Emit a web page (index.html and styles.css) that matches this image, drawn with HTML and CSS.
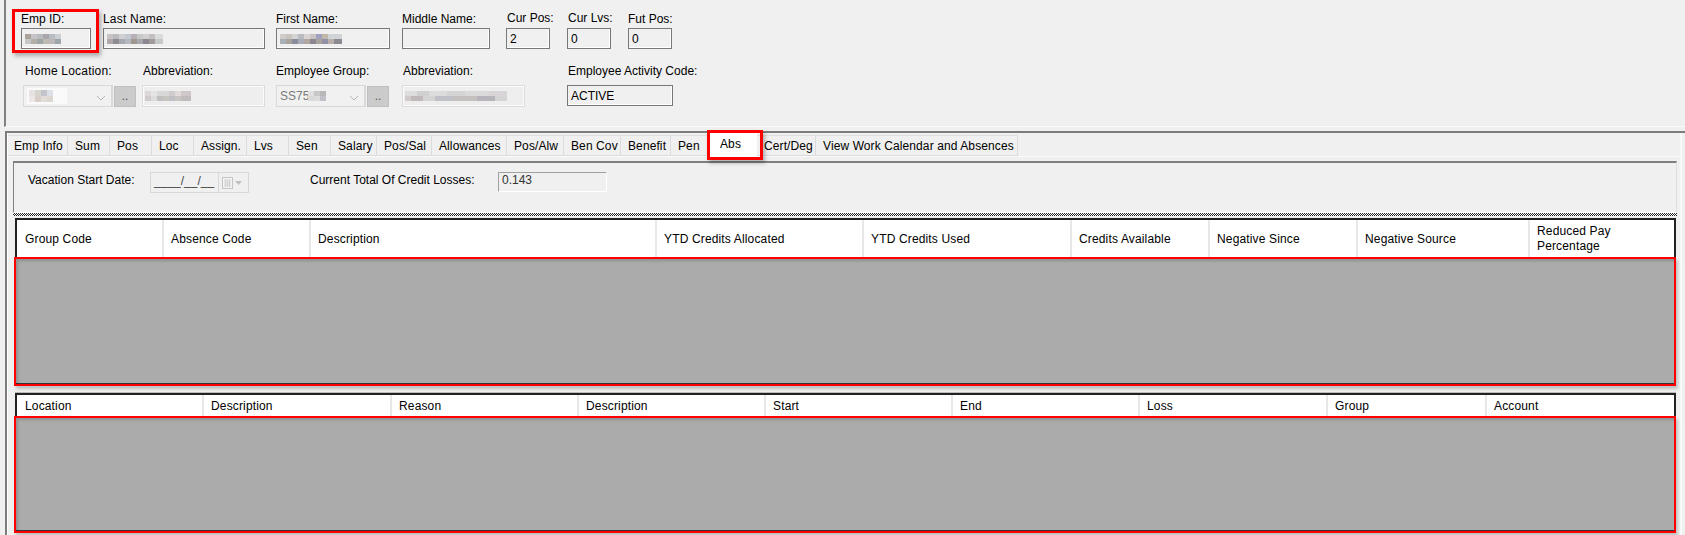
FILE: index.html
```html
<!DOCTYPE html>
<html lang="en">
<head>
<meta charset="utf-8">
<title>Employee Absences</title>
<link rel="stylesheet" href="styles.css">
</head>
<body>
<header class="head">
  <div class="callout callout-emp"></div>
  <div class="row row-one">
    <div class="field w-emp"><label class="lbl">Emp ID:</label><div class="box box-dark"><i class="mos mos-emp"></i></div></div>
    <div class="field w-last"><label class="lbl lbl-wide">Last Name:</label><div class="box box-dark"><i class="mos mos-last"></i></div></div>
    <div class="field w-first"><label class="lbl">First Name:</label><div class="box box-dark"><i class="mos mos-first"></i></div></div>
    <div class="field w-mid"><label class="lbl">Middle Name:</label><div class="box box-dark"></div></div>
    <div class="field w-pos"><label class="lbl lbl-up">Cur Pos:</label><div class="box box-dark">2</div></div>
    <div class="field w-lvs"><label class="lbl lbl-up">Cur Lvs:</label><div class="box box-dark">0</div></div>
    <div class="field w-fut"><label class="lbl">Fut Pos:</label><div class="box box-dark">0</div></div>
  </div>
  <div class="row row-two">
    <div class="field w-home"><label class="lbl lbl-in2 lbl-wide">Home Location:</label>
      <div class="combo-line">
        <div class="combo"><i class="mos mos-home"></i><svg class="chev" width="10" height="6" viewBox="0 0 10 6"><path d="M1 1l4 4 4-4" fill="none" stroke="#b4b4b4"/></svg></div>
        <div class="dots">..</div>
      </div>
    </div>
    <div class="field w-abbr"><label class="lbl lbl-in1">Abbreviation:</label><div class="box box-light"><i class="mos mos-abbr"></i></div></div>
    <div class="field w-group"><label class="lbl">Employee Group:</label>
      <div class="combo-line">
        <div class="combo combo-text"><span class="ss">SS75</span><i class="mos mos-group"></i><svg class="chev" width="10" height="6" viewBox="0 0 10 6"><path d="M1 1l4 4 4-4" fill="none" stroke="#b4b4b4"/></svg></div>
        <div class="dots">..</div>
      </div>
    </div>
    <div class="field w-abbr2"><label class="lbl lbl-in1">Abbreviation:</label><div class="box box-light"><i class="mos mos-abbr2"></i></div></div>
    <div class="field w-act"><label class="lbl lbl-in1">Employee Activity Code:</label><div class="box box-dark">ACTIVE</div></div>
  </div>
</header>

<main class="main">
  <div class="main-in">
    <nav class="tabs">
      <a class="tab t60">Emp Info</a>
      <a class="tab t42">Sum</a>
      <a class="tab t42">Pos</a>
      <a class="tab t42">Loc</a>
      <a class="tab t53">Assign.</a>
      <a class="tab t42">Lvs</a>
      <a class="tab t42">Sen</a>
      <a class="tab t46">Salary</a>
      <a class="tab t55">Pos/Sal</a>
      <a class="tab t75">Allowances</a>
      <a class="tab t57">Pos/Alw</a>
      <a class="tab t57">Ben Cov</a>
      <a class="tab t50">Benefit</a>
      <a class="tab t37">Pen</a>
      <a class="tab tab-on t49">Abs<span class="callout callout-tab"></span></a>
      <a class="tab t59">Cert/Deg</a>
      <a class="tab t202">View Work Calendar and Absences</a>
    </nav>

    <section class="panel">
      <span class="plabel plabel-vac">Vacation Start Date:</span>
      <div class="date">
        <span class="date-text">____/__/__</span>
        <span class="date-btn">
          <svg width="11" height="12" viewBox="0 0 11 12"><rect x=".5" y=".5" width="10" height="11" fill="#f4f4f4" stroke="#c4c4c4"/><path d="M2 3h7M2 5h7M2 7h7M2 9h7M3.5 3v7M5.5 3v7M7.5 3v7" stroke="#d4d4d4" fill="none"/></svg>
          <svg width="7" height="4" viewBox="0 0 7 4"><path d="M0 0h7L3.5 4z" fill="#c0c0c0"/></svg>
        </span>
      </div>
      <span class="plabel plabel-loss">Current Total Of Credit Losses:</span>
      <div class="sunken">0.143</div>
    </section>
    <div class="hatch"></div>

    <section class="grid grid-one">
      <div class="ghead ghead-one">
        <div class="gcell">Group Code</div>
        <div class="gcell">Absence Code</div>
        <div class="gcell">Description</div>
        <div class="gcell">YTD Credits Allocated</div>
        <div class="gcell">YTD Credits Used</div>
        <div class="gcell">Credits Available</div>
        <div class="gcell">Negative Since</div>
        <div class="gcell">Negative Source</div>
        <div class="gcell">Reduced Pay<br>Percentage</div>
      </div>
      <div class="gbody gbody-one"></div>
    </section>

    <section class="grid grid-two">
      <div class="ghead ghead-two">
        <div class="gcell">Location</div>
        <div class="gcell">Description</div>
        <div class="gcell">Reason</div>
        <div class="gcell">Description</div>
        <div class="gcell">Start</div>
        <div class="gcell">End</div>
        <div class="gcell">Loss</div>
        <div class="gcell">Group</div>
        <div class="gcell">Account</div>
      </div>
      <div class="gbody gbody-two"></div>
    </section>
  </div>
</main>
</body>
</html>
```
FILE: styles.css
```css
* { box-sizing: border-box; }
html, body { margin: 0; padding: 0; }
body {
  width: 1685px;
  height: 535px;
  overflow: hidden;
  background: #f0f0f0;
  color: #000;
  font: 12px/14px "Liberation Sans", Arial, sans-serif;
}

/* Annotation rectangles */
.callout {
  position: absolute;
  border: 2px solid #f00;
  box-shadow: 2px 3px 4px rgba(0, 0, 0, .28);
  pointer-events: none;
}
.callout-emp { left: 6px; top: 9px; width: 87px; height: 44px; border-width: 3px; }
.callout-tab { left: -1px; right: -6px; top: -3px; bottom: -3px; border-width: 3px; }

/* Header form */
.head {
  position: relative;
  height: 127px;
  margin-left: 4px;
  border-left: 2px solid #808080;
  border-bottom: 1px solid #fbfbfb;
  padding-left: 15px;
}
.row { display: flex; }
.row-one { padding-top: 12px; }
.row-two { padding-top: 15px; margin-left: 2px; }
.field { flex: none; }
.lbl { display: block; height: 14px; margin-bottom: 2px; white-space: nowrap; }
.lbl-up { margin-top: -1px; margin-bottom: 3px; padding-left: 1px; }
.lbl-in2 { padding-left: 2px; }
.lbl-in1 { padding-left: 1px; }
.lbl-wide { letter-spacing: .2px; }
.row-two .lbl { margin-bottom: 7px; }

.w-emp { width: 70px; }
.w-last { width: 162px; margin-left: 12px; }
.w-first { width: 114px; margin-left: 11px; }
.w-mid { width: 88px; margin-left: 12px; }
.w-pos { width: 44px; margin-left: 16px; }
.w-lvs { width: 44px; margin-left: 17px; }
.w-fut { width: 44px; margin-left: 17px; }
.w-home { width: 113px; }
.w-abbr { width: 123px; margin-left: 6px; }
.w-group { width: 113px; margin-left: 11px; }
.w-abbr2 { width: 123px; margin-left: 13px; }
.w-act { width: 106px; margin-left: 42px; }

.box {
  display: flex;
  align-items: center;
  padding-left: 3px;
  white-space: nowrap;
}
.box-dark { height: 21px; border: 1px solid #787878; box-shadow: inset -1px -1px 0 #fff; }
.box-light { height: 22px; border: 2px solid #fbfbfb; outline: 1px solid #dcdcdc; outline-offset: -1px; background: #eee; padding-left: 0; }

.combo-line { display: flex; gap: 1px; }
.combo {
  position: relative;
  display: flex;
  align-items: center;
  width: 90px;
  height: 22px;
  border: 1px solid #d9d9d9;
  border-right-width: 2px;
  background: #f1f1f1;
  padding-left: 3px;
}
.chev { position: absolute; right: 5px; top: 9px; }
.dots {
  width: 22px;
  height: 21px;
  margin-top: 1px;
  background: #cbcbcb;
  border: 1px solid #c0c0c0;
  text-align: center;
  line-height: 19px;
  color: #555;
}
.ss { color: #7a7a7a; white-space: nowrap; }

/* Pixelated (blurred) values */
.mos { display: block; flex: none; height: 10px; background-repeat: no-repeat; }
.mos-emp {
  width: 36px;
  background-image:
    linear-gradient(90deg, #a9a39c 0 6px, #c4c4c8 6px 12px, #b9bbbd 12px 18px, #a8a8ac 18px 24px, #b8bcc4 24px 30px, #ccd0d4 30px),
    linear-gradient(90deg, #c6c6c6 0 6px, #b3afa8 6px 12px, #9ea5a8 12px 18px, #bfb9b4 18px 24px, #bcb8b8 24px 30px, #9ea6aa 30px);
  background-size: 100% 5px;
  background-position: 0 0, 0 5px;
}
.mos-last {
  width: 56px;
  background-image:
    linear-gradient(90deg, #c8c4c4 0 6px, #bcbcc0 6px 12px, #d0d0d0 12px 18px, #c4c8d0 18px 24px, #b8b0b8 24px 30px, #c8c8c8 30px 36px, #d4d0d0 36px 42px, #c4c0c0 42px 48px, #dcdcdc 48px),
    linear-gradient(90deg, #b0a8a8 0 6px, #8f8c94 6px 12px, #a8a8b0 12px 18px, #b4b8c0 18px 24px, #a09890 24px 30px, #a8a8ac 30px 36px, #8c8890 36px 42px, #a09c9c 42px 48px, #c4c8c8 48px);
  background-size: 100% 5px;
  background-position: 0 0, 0 5px;
}
.mos-first {
  width: 62px;
  background-image:
    linear-gradient(90deg, #d0ccc8 0 6px, #c8c4c0 6px 12px, #d4d4d4 12px 18px, #b8bcc0 18px 24px, #d8d4d4 24px 30px, #c8c4c4 30px 36px, #a0a0c0 36px 42px, #c0b8a8 42px 48px, #d0d4d8 48px),
    linear-gradient(90deg, #a8b0b8 0 6px, #a8a49c 6px 12px, #8c8c9c 12px 18px, #a8aeb8 18px 24px, #b0a8a0 24px 30px, #8c8890 30px 36px, #a8a49c 36px 42px, #9090a8 42px 48px, #b8b0a8 48px 54px, #8c8c90 54px);
  background-size: 100% 5px;
  background-position: 0 0, 0 5px;
}
.mos-home {
  width: 40px;
  height: 16px;
  background-color: #fafafa;
  background-image:
    linear-gradient(90deg, #e6e2e2 0 6px, #d8d4d0 6px 12px, #c4c4cc 12px 18px, #dde0e6 18px 24px, transparent 24px),
    linear-gradient(90deg, #ebe7e7 0 6px, #d8d0c8 6px 12px, #e0dcd8 12px 18px, #dcd8d0 18px 24px, transparent 24px);
  background-size: 100% 6px;
  background-position: 2px 2px, 2px 8px;
}
.mos-group {
  width: 18px;
  height: 10px;
  margin-left: -1px;
  background-image:
    linear-gradient(90deg, #e0e0e0 0 6px, #c8c8c8 6px 12px, #b8b8b8 12px),
    linear-gradient(90deg, #d8d8d8 0 6px, #dcdcdc 6px 12px, #c0c0c8 12px);
  background-size: 100% 5px;
  background-position: 0 0, 0 5px;
}
.mos-abbr {
  width: 46px;
  margin-left: 1px;
  background-image:
    linear-gradient(90deg, #dcd8d8 0 6px, #e4e4e4 6px 12px, #d8d8d8 12px 18px, #d8d8d8 18px 24px, #d0cccc 24px 30px, #e0dcdc 30px 36px, #d0c8c8 36px),
    linear-gradient(90deg, #d0caca 0 6px, #dcdcdc 6px 12px, #c0c0c0 12px 18px, #c8c4c0 18px 24px, #c0c0c4 24px 30px, #c8c4c4 30px 36px, #c0bcbc 36px);
  background-size: 100% 5px;
  background-position: 0 0, 0 5px;
}
.mos-abbr2 {
  width: 102px;
  margin-left: 1px;
  background-image:
    linear-gradient(90deg, #dcdcdc 0 12px, #d0d0d0 12px 24px, #dcdcdc 24px 42px, #d4d4d4 42px 60px, #dadada 60px 84px, #d8d4d8 84px),
    linear-gradient(90deg, #d0caca 0 6px, #c0b8b8 6px 18px, #d4d4d4 18px 30px, #c0c0c8 30px 48px, #c4c0c0 48px 72px, #b8b4bc 72px 90px, #d4d4d4 90px);
  background-size: 100% 5px;
  background-position: 0 0, 0 5px;
}

/* Tabbed area */
.main {
  height: 404px;
  margin-left: 5px;
  margin-top: 4px;
  border-top: 2px solid #7c7c7c;
  border-left: 2px solid #7c7c7c;
}
.main-in {
  width: 1675px;
  height: 100%;
  border-left: 1px solid #fff;
  border-right: 2px solid #f9f9f9;
  padding-top: 2px;
}

.tabs { display: flex; height: 22px; border-bottom: 1px solid #fafafa; }
.tab {
  flex: none;
  height: 21px;
  padding-left: 7px;
  border-top: 1px solid #e0e0e0;
  border-right: 1px solid #dcdcdc;
  border-bottom: 1px solid #dcdcdc;
  line-height: 20px;
  letter-spacing: .1px;
  white-space: nowrap;
}
.t37 { width: 37px; }
.t42 { width: 42px; }
.t46 { width: 46px; }
.t49 { width: 49px; }
.t50 { width: 50px; }
.t53 { width: 53px; }
.t55 { width: 55px; }
.t57 { width: 57px; }
.t59 { width: 59px; }
.t60 { width: 60px; padding-left: 6px; }
.t75 { width: 75px; }
.t202 { width: 202px; }
.tab-on {
  position: relative;
  z-index: 1;
  height: 24px;
  margin-top: -2px;
  padding-left: 12px;
  background: #fff;
  border: 0;
  line-height: 22px;
}

.panel {
  display: flex;
  align-items: flex-start;
  height: 52px;
  margin: 4px 3px 0 5px;
  border-top: 2px solid #808080;
  border-left: 1px solid #808080;
  border-right: 1px solid #dedede;
  border-bottom: 1px solid #fff;
  padding-top: 9px;
}
.plabel { white-space: nowrap; margin-top: 1px; }
.plabel-vac { margin-left: 14px; width: 122px; }
.plabel-loss { margin-left: 61px; width: 188px; }
.date {
  display: flex;
  width: 99px;
  height: 21px;
  border: 1px solid #d8d8d8;
}
.date-text { width: 68px; padding-left: 3px; color: #444; border-right: 1px solid #d8d8d8; line-height: 17px; }
.date-btn { display: flex; align-items: center; gap: 2px; padding-left: 3px; }
.sunken {
  width: 109px;
  height: 20px;
  padding-left: 3px;
  line-height: 15px;
  border: 1px solid #fff;
  border-top-color: #a0a0a0;
  border-left-color: #a0a0a0;
  color: #333;
}
.hatch {
  height: 3px;
  margin: 0 3px 0 5px;
  background: repeating-conic-gradient(#222 0 25%, #fff 0 50%) 0 0 / 2px 2px;
}

.grid { margin: 2px 4px 0 7px; border: 2px solid #222; border-bottom: 0; }
.grid-two { margin-top: 7px; box-shadow: 0 -1px 0 #bbb; }
.ghead { display: grid; background: #fff; }
.ghead-one {
  height: 37px;
  grid-template-columns: 147px 147px 346px 207px 208px 138px 148px 172px 1fr;
}
.ghead-two {
  height: 21px;
  grid-template-columns: 187px 188px 187px 187px 187px 187px 188px 159px 1fr;
}
.gcell {
  display: flex;
  align-items: center;
  padding-left: 7px;
  border-right: 2px solid #e8e8e8;
  letter-spacing: .15px;
  white-space: nowrap;
}
.gcell:first-child { padding-left: 8px; }
.gcell:last-child { border-right: 0; }
.ghead-one .gcell:last-child { line-height: 15px; }
.gbody {
  margin: 0 -2px 0 -3px;
  background: #ababab;
  border: 2px solid #f00;
  box-shadow: inset 3px 3px 3px -1px rgba(0, 0, 0, .16), inset 0 -1px 0 #333, 2px 3px 3px rgba(0, 0, 0, .2);
}
.gbody-one { height: 129px; }
.gbody-two { height: 117px; }
```
